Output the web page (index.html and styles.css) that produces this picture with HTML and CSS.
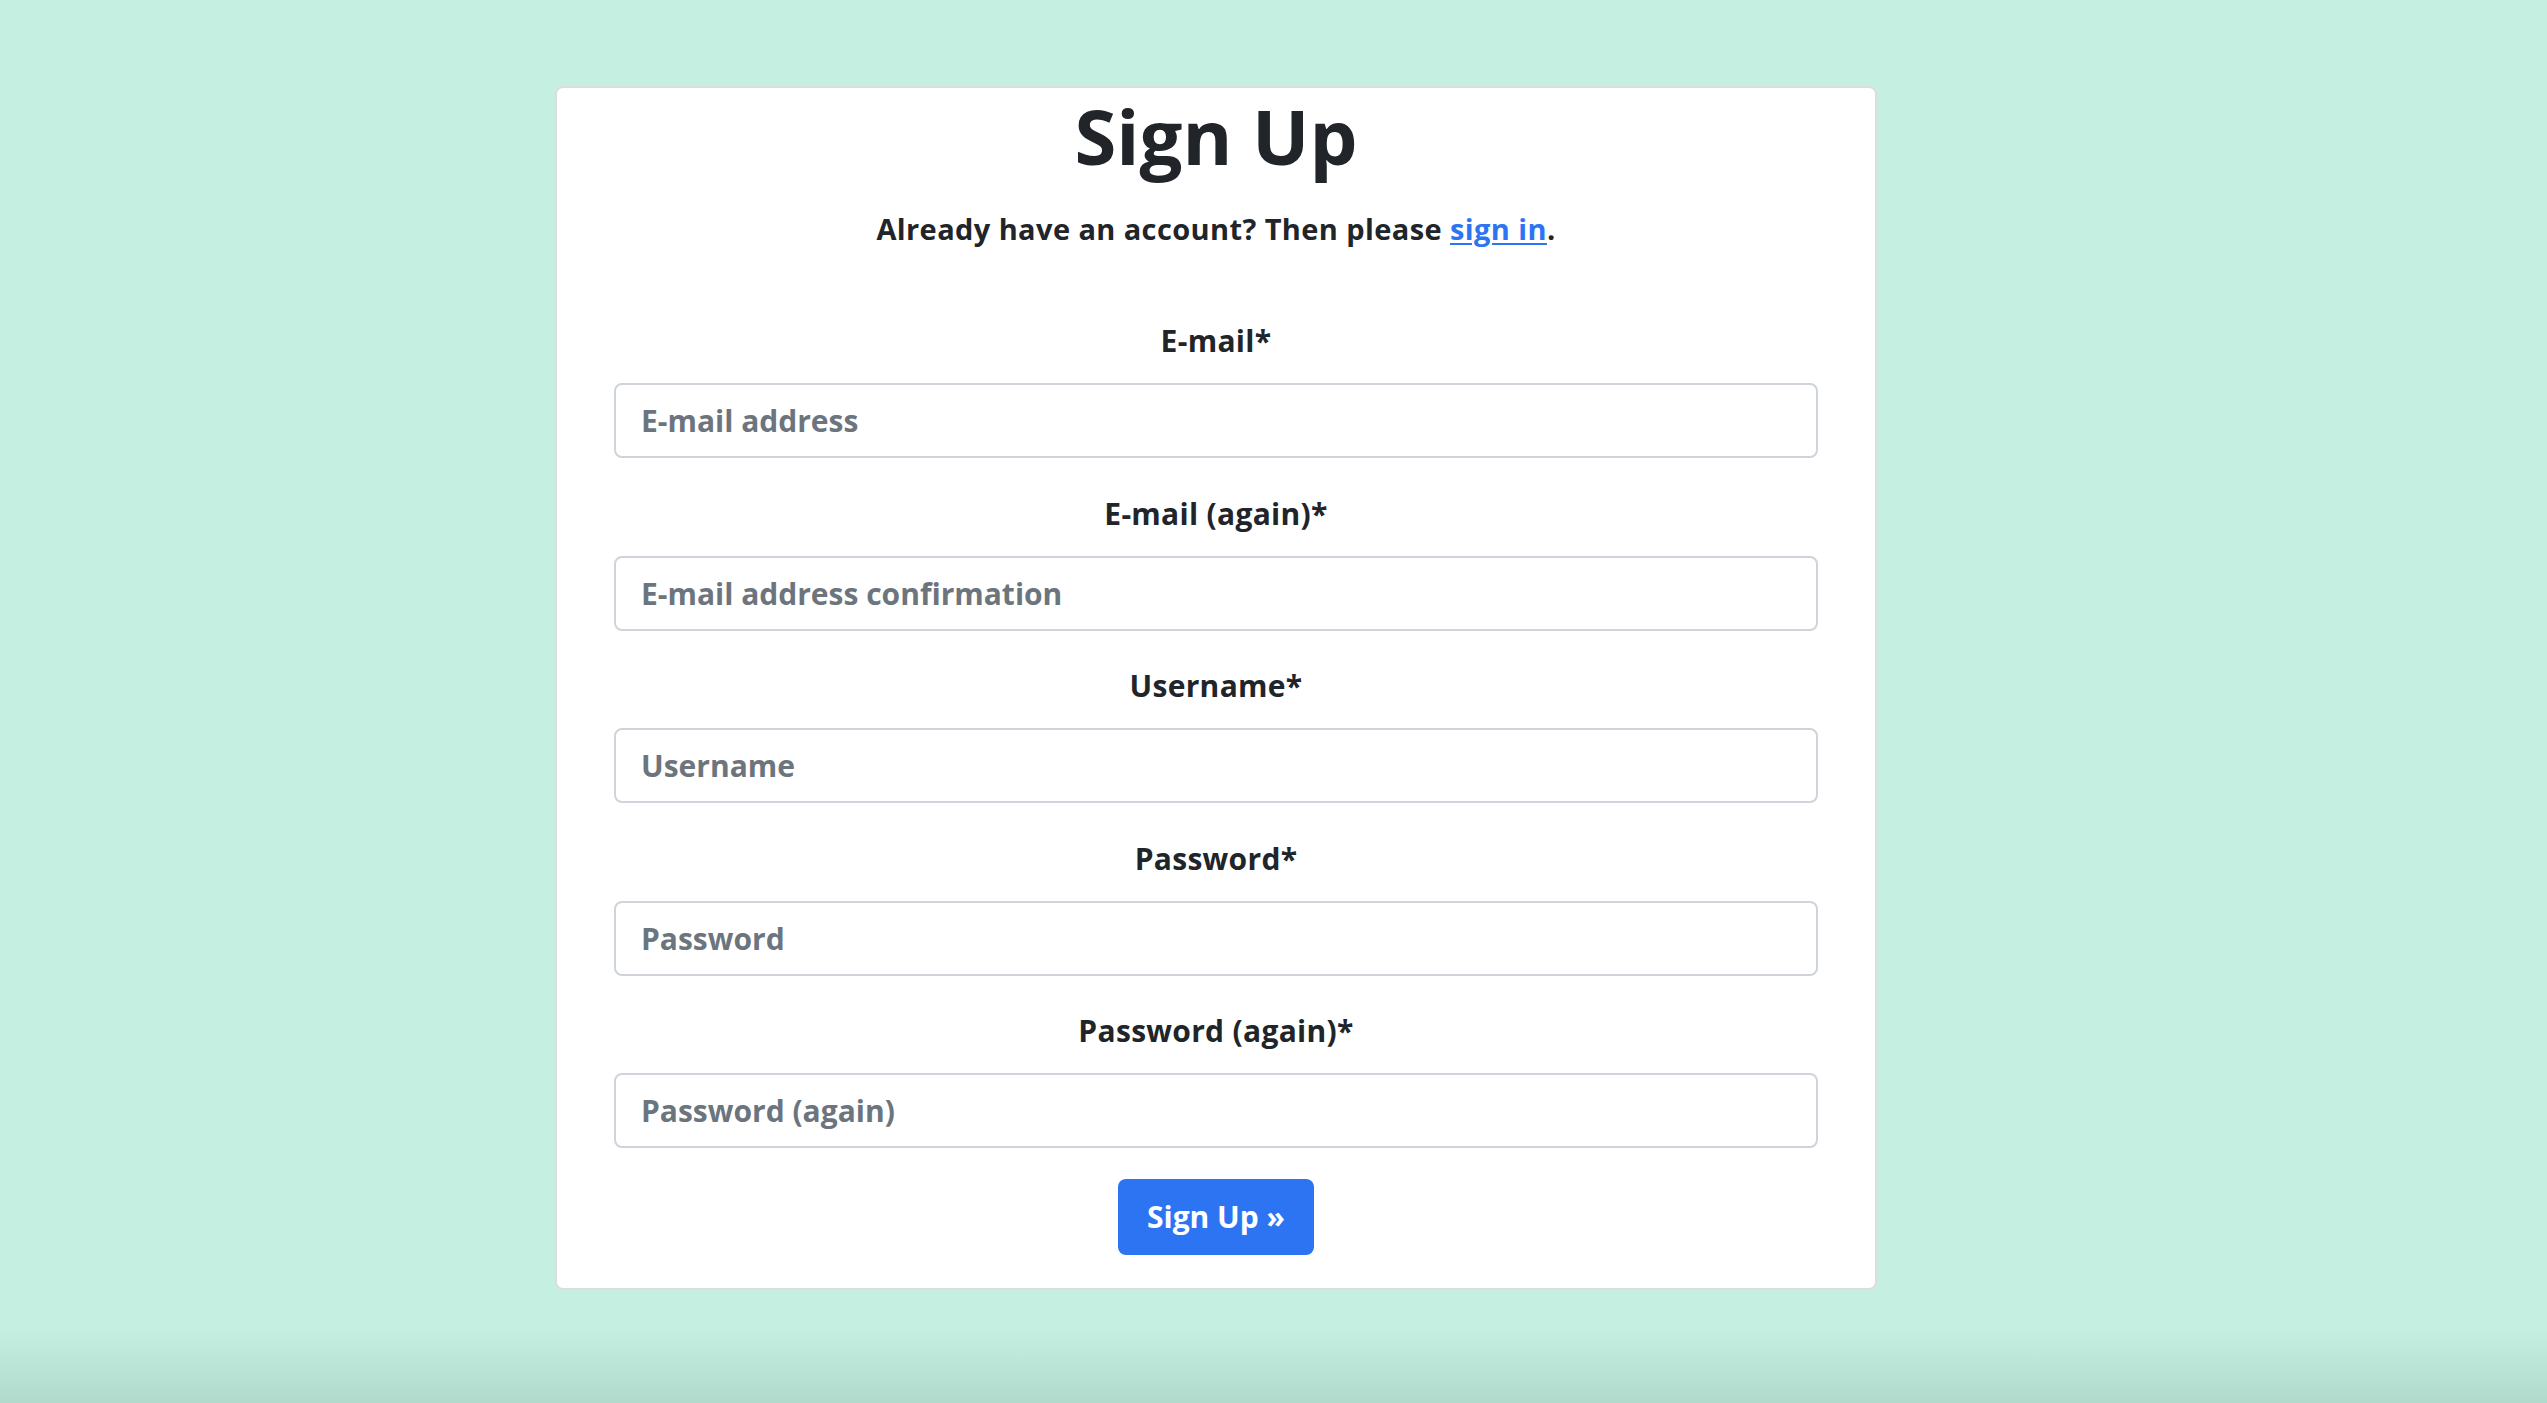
FILE: index.html
```html
<!DOCTYPE html>
<html lang="en">
<head>
<meta charset="utf-8">
<title>Sign Up</title>
<link rel="stylesheet" href="styles.css">
</head>
<body>
<main class="page">
  <section class="card">
    <h1 class="title">Sign Up</h1>
    <p class="lead">Already have an account? Then please <a href="#" class="link">sign in</a>.</p>
    <form class="form">
      <div class="field">
        <label class="label" for="email">E-mail*</label>
        <input class="input" id="email" type="email" placeholder="E-mail address">
      </div>
      <div class="field">
        <label class="label" for="email2">E-mail (again)*</label>
        <input class="input" id="email2" type="email" placeholder="E-mail address confirmation">
      </div>
      <div class="field">
        <label class="label" for="username">Username*</label>
        <input class="input" id="username" type="text" placeholder="Username">
      </div>
      <div class="field">
        <label class="label" for="password">Password*</label>
        <input class="input" id="password" type="password" placeholder="Password">
      </div>
      <div class="field">
        <label class="label" for="password2">Password (again)*</label>
        <input class="input" id="password2" type="password" placeholder="Password (again)">
      </div>
      <div class="actions">
        <button class="button" type="submit">Sign Up &raquo;</button>
      </div>
    </form>
  </section>
</main>
</body>
</html>
```

FILE: styles.css
```css
html {
  height: 100%;
  background: linear-gradient(to bottom, #c4efe1 0, #c4efe1 1330px, #b1dacd 100%);
}

body {
  margin: 0;
  font-family: "Open Sans", "Liberation Sans", sans-serif;
  font-weight: 700;
  color: #212529;
}

.page {
  padding-top: 86px;
  padding-left: 555px;
}

.card {
  box-sizing: border-box;
  width: 1322px;
  background: #ffffff;
  border: 2px solid #dddddd;
  border-radius: 8px;
  padding: 2px 57px 33px;
  text-align: center;
}

.title {
  margin: 0;
  font-size: 76px;
  line-height: 1.2;
  font-weight: 700;
}

.lead {
  margin: 27.5px 0 0;
  font-size: 29px;
  line-height: 40px;
  letter-spacing: 0.4px;
}

.link {
  color: #2d74f3;
  text-decoration: underline;
  text-decoration-thickness: 2px;
  text-underline-offset: 3px;
}

.form {
  margin-top: 69.5px;
}

.field {
  display: flex;
  flex-direction: column;
  align-items: stretch;
  margin-bottom: 32.5px;
}

.label {
  font-size: 30px;
  line-height: 45px;
  margin-bottom: 20px;
  letter-spacing: 0.3px;
}

.input {
  box-sizing: border-box;
  height: 75px;
  width: 100%;
  margin: 0;
  padding: 0 25px;
  border: 2px solid #ced4da;
  border-radius: 8px;
  background: #ffffff;
  font-family: "Open Sans", "Liberation Sans", sans-serif;
  font-weight: 700;
  font-size: 30px;
  color: #212529;
  outline: none;
}

.input::placeholder {
  color: #6c757d;
  opacity: 1;
}

.actions {
  display: flex;
  justify-content: center;
  margin-top: -1.5px;
}

.button {
  box-sizing: border-box;
  height: 76px;
  padding: 0 29px;
  border: none;
  border-radius: 8px;
  background: #2d74f3;
  color: #ffffff;
  font-family: "Open Sans", "Liberation Sans", sans-serif;
  font-weight: 700;
  font-size: 30px;
  line-height: 1;
  cursor: pointer;
}
```
